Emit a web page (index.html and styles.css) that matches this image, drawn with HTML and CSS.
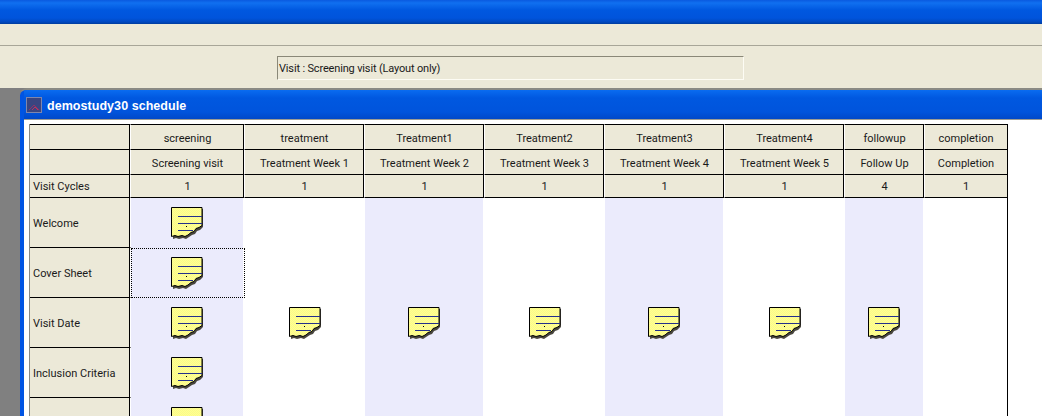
FILE: index.html
```html
<!DOCTYPE html>
<html lang="en">
<head>
<meta charset="utf-8">
<title>demostudy30 schedule</title>
<link rel="stylesheet" href="styles.css">
</head>
<body>
<svg class="defs" width="0" height="0" aria-hidden="true">
  <defs>
    <pattern id="dith" width="2" height="2" patternUnits="userSpaceOnUse">
      <rect width="2" height="2" fill="#ffff92"/>
      <rect width="1" height="1" fill="#fbfa88"/>
      <rect x="1" y="1" width="1" height="1" fill="#fbfa88"/>
    </pattern>
    <symbol id="note" viewBox="0 0 34 34">
      <path d="M3 3H33V21L30 24L27 25L25 28L22 29L19 31L16 33L13 32L9 33L6 32L3 33Z" fill="#4a473f"/>
      <path d="M1.5 1.5H32V19.5L29 21.5L26 22.5L24 25.5L21 26.5L18 29L15 30.5L12 29.5L8 30.5L5 29.5L1.5 30.5Z" fill="url(#dith)" stroke="#000" stroke-width="1"/>
      <path d="M8 10.5H32M8 17.5H32M8 24.5H23" stroke="#24308c" stroke-width="1" fill="none"/>
      <rect x="16" y="20" width="1" height="1" fill="#000"/>
    </symbol>
  </defs>
</svg>
<header class="appbar"></header>
<nav class="menubar"></nav>
<div class="toolbar"><div class="status">Visit : Screening visit (Layout only)</div></div>
<main class="workspace">
  <section class="window">
    <div class="titlebar">
      <svg class="appicon" viewBox="0 0 16 16" width="16" height="16" aria-hidden="true">
        <rect x="0.5" y="0.5" width="15" height="15" fill="#3a4580" stroke="#7f86ac"/>
        <path d="M3 13L8 8L13 13" fill="none" stroke="#8c3468"/>
        <path d="M6 13L9 10L12 13" fill="none" stroke="#c03060"/>
      </svg>
      <span class="title">demostudy30 schedule</span>
    </div>
    <div class="client">
      <div class="grid">
        <div class="hd rowhead row1"></div>
        <div class="hd row1">screening</div>
        <div class="hd row1">treatment</div>
        <div class="hd row1">Treatment1</div>
        <div class="hd row1">Treatment2</div>
        <div class="hd row1">Treatment3</div>
        <div class="hd row1">Treatment4</div>
        <div class="hd row1">followup</div>
        <div class="hd row1 last">completion</div>

        <div class="hd rowhead"></div>
        <div class="hd">Screening visit</div>
        <div class="hd">Treatment Week 1</div>
        <div class="hd">Treatment Week 2</div>
        <div class="hd">Treatment Week 3</div>
        <div class="hd">Treatment Week 4</div>
        <div class="hd">Treatment Week 5</div>
        <div class="hd">Follow Up</div>
        <div class="hd last">Completion</div>

        <div class="hd rowhead cycles">Visit Cycles</div>
        <div class="hd cycles">1</div>
        <div class="hd cycles">1</div>
        <div class="hd cycles">1</div>
        <div class="hd cycles">1</div>
        <div class="hd cycles">1</div>
        <div class="hd cycles">1</div>
        <div class="hd cycles">4</div>
        <div class="hd cycles last">1</div>

        <div class="form">Welcome</div>
        <div class="cell alt"><svg class="note"><use href="#note"/></svg></div>
        <div class="cell"></div><div class="cell alt"></div><div class="cell"></div><div class="cell alt"></div><div class="cell"></div><div class="cell alt"></div><div class="cell"></div>

        <div class="form">Cover Sheet</div>
        <div class="cell alt selected"><svg class="note"><use href="#note"/></svg></div>
        <div class="cell"></div><div class="cell alt"></div><div class="cell"></div><div class="cell alt"></div><div class="cell"></div><div class="cell alt"></div><div class="cell"></div>

        <div class="form">Visit Date</div>
        <div class="cell alt"><svg class="note"><use href="#note"/></svg></div>
        <div class="cell"><svg class="note"><use href="#note"/></svg></div>
        <div class="cell alt"><svg class="note"><use href="#note"/></svg></div>
        <div class="cell"><svg class="note"><use href="#note"/></svg></div>
        <div class="cell alt"><svg class="note"><use href="#note"/></svg></div>
        <div class="cell"><svg class="note"><use href="#note"/></svg></div>
        <div class="cell alt"><svg class="note"><use href="#note"/></svg></div>
        <div class="cell"></div>

        <div class="form">Inclusion Criteria</div>
        <div class="cell alt"><svg class="note"><use href="#note"/></svg></div>
        <div class="cell"></div><div class="cell alt"></div><div class="cell"></div><div class="cell alt"></div><div class="cell"></div><div class="cell alt"></div><div class="cell"></div>

        <div class="form"></div>
        <div class="cell alt"><svg class="note"><use href="#note"/></svg></div>
        <div class="cell"></div><div class="cell alt"></div><div class="cell"></div><div class="cell alt"></div><div class="cell"></div><div class="cell alt"></div><div class="cell"></div>
      </div>
    </div>
  </section>
</main>
</body>
</html>
```
FILE: styles.css
```css
* { box-sizing: border-box; }
html, body { margin: 0; height: 416px; overflow: hidden; }
body {
  background: #ece9d8;
  font-family: Roboto, "Liberation Sans", Arial, sans-serif;
  font-size: 11px;
  color: #1a1a1a;
}
.defs { display: block; height: 0; }
.appbar {
  height: 24px;
  background: linear-gradient(#0a5ae0 0, #1070f0 3px, #0058e0 10px, #0054dc 18px, #0048c0 22px, #003c9c 24px);
}
.menubar {
  height: 22px;
  background: #ece9d8;
  border-bottom: 1px solid #a8a698;
  box-shadow: 0 1px 0 #fff;
}
.toolbar {
  height: 42px;
  padding: 10px 0 0 277px;
  background: #ece9d8;
}
.status {
  width: 467px;
  height: 24px;
  padding: 1px 0 0 1px;
  line-height: 22px;
  letter-spacing: -0.16px;
  border: 1px solid;
  border-color: #8a8878 #fdfcf4 #fdfcf4 #8a8878;
  background: #ece9d8;
}
.workspace {
  height: 328px;
  padding-left: 20px;
  background: #808080;
}
.window {
  height: 328px;
  background: #0054e3;
  border-top: 2px solid #8a8a84;
  border-top-left-radius: 7px;
  padding-left: 4px;
  overflow: hidden;
}
.titlebar {
  display: flex;
  align-items: center;
  gap: 5px;
  height: 29px;
  padding-left: 2px;
  background: linear-gradient(#0a6cf0 0, #0058e0 8px, #0054dc 22px, #0048c8 29px);
}
.appicon { flex: none; }
.title {
  padding-top: 3px;
  font-family: "Liberation Sans", sans-serif;
  font-weight: bold;
  font-size: 12.5px;
  letter-spacing: 0.05px;
  color: #fff;
}
.client {
  height: 297px;
  background: #fff;
  border-top: 1px solid #9c9c94;
  padding: 4px 0 0 5px;
  overflow: hidden;
}
.grid {
  display: grid;
  width: 979px;
  grid-template-columns: 101px 114px 120px 120px 120px 120px 120px 80px 82px;
  grid-template-rows: 26px 25px 23px repeat(5, 50px);
  border-right: 1px solid #000;
  border-left: 1px solid #8a8a84;
  background: #fff;
}
.hd {
  display: flex;
  align-items: center;
  justify-content: center;
  padding-top: 2px;
  background: #ece9d8;
  border-right: 1px solid #fff;
  border-bottom: 1px solid #000;
  box-shadow: inset -1px 0 0 #000;
}
.row1 { border-top: 1px solid #000; }
.cycles { padding-top: 1px; }
.hd.last { border-right: 0; box-shadow: none; }
.rowhead { justify-content: flex-start; padding-left: 3px; }
.form {
  display: flex;
  align-items: center;
  padding: 2px 0 0 3px;
  background: #ece9d8;
  border-right: 1px solid #fff;
  border-bottom: 1px solid #000;
  box-shadow: inset -1px 0 0 #000;
}
.cell { display: flex; align-items: center; justify-content: center; background: #fff; }
.alt { background: #ebebfc; border-right: 2px solid #fff; }
.selected { outline: 1px dotted #000; outline-offset: -1px; }
.note { width: 34px; height: 34px; }
```
